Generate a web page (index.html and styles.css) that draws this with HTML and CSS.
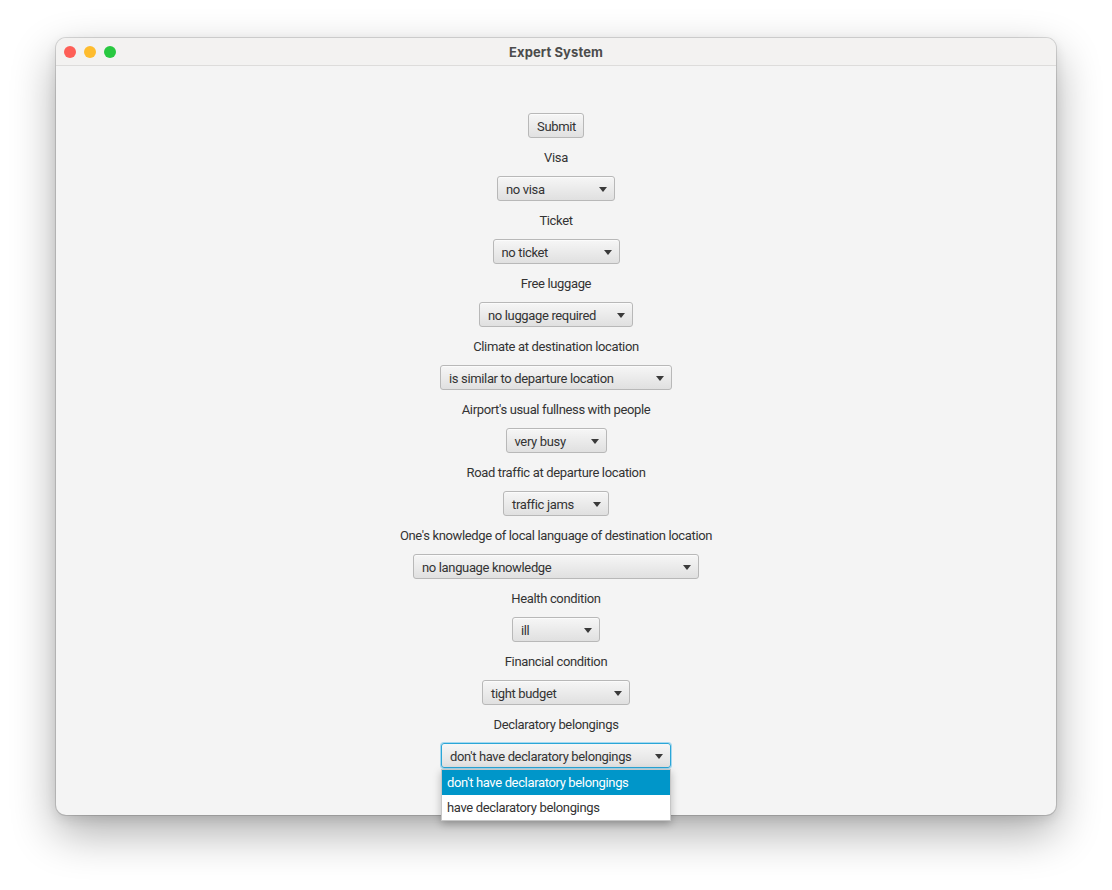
FILE: index.html
```html
<!DOCTYPE html>
<html lang="en">
<head>
<meta charset="utf-8">
<title>Expert System</title>
<link rel="stylesheet" href="styles.css">
</head>
<body>
<div class="window">
  <div class="titlebar">
    <div class="lights">
      <span class="light red"></span>
      <span class="light yellow"></span>
      <span class="light green"></span>
    </div>
    <div class="title">Expert System</div>
  </div>
  <div class="content">
    <button class="btn">Submit</button>
    <div class="label">Visa</div>
    <div class="combo w-visa"><span class="val">no visa</span><span class="arrow"></span></div>
    <div class="label">Ticket</div>
    <div class="combo w-ticket"><span class="val">no ticket</span><span class="arrow"></span></div>
    <div class="label">Free luggage</div>
    <div class="combo w-luggage"><span class="val">no luggage required</span><span class="arrow"></span></div>
    <div class="label">Climate at destination location</div>
    <div class="combo w-climate"><span class="val">is similar to departure location</span><span class="arrow"></span></div>
    <div class="label">Airport's usual fullness with people</div>
    <div class="combo w-airport"><span class="val">very busy</span><span class="arrow"></span></div>
    <div class="label">Road traffic at departure location</div>
    <div class="combo w-road"><span class="val">traffic jams</span><span class="arrow"></span></div>
    <div class="label">One's knowledge of local language of destination location</div>
    <div class="combo w-lang"><span class="val">no language knowledge</span><span class="arrow"></span></div>
    <div class="label">Health condition</div>
    <div class="combo w-health"><span class="val">ill</span><span class="arrow"></span></div>
    <div class="label">Financial condition</div>
    <div class="combo w-fin"><span class="val">tight budget</span><span class="arrow"></span></div>
    <div class="label">Declaratory belongings</div>
    <div class="combo w-decl focused"><span class="val">don't have declaratory belongings</span><span class="arrow"></span>
      <div class="popup">
        <div class="item selected">don't have declaratory belongings</div>
        <div class="item">have declaratory belongings</div>
      </div>
    </div>
  </div>
</div>
</body>
</html>
```

FILE: styles.css
```css
* { box-sizing: border-box; }
html, body { margin: 0; padding: 0; background: #ffffff; }
body {
  width: 1112px;
  height: 890px;
  overflow: hidden;
  font-family: Roboto, "Liberation Sans", sans-serif;
  letter-spacing: -0.35px;
}
.window {
  margin: 38px 0 0 56px;
  width: 1000px;
  height: 777px;
  border-radius: 10px;
  background: #f4f4f4;
  box-shadow: 0 0 0 1px rgba(0,0,0,0.13), 0 18px 45px rgba(0,0,0,0.32), 0 4px 12px rgba(0,0,0,0.10);
  display: flex;
  flex-direction: column;
}
.titlebar {
  position: relative;
  height: 28px;
  flex: none;
  background: #f3f2f1;
  border-bottom: 1px solid #dddcdb;
  border-radius: 10px 10px 0 0;
  display: flex;
  align-items: center;
  justify-content: center;
}
.lights {
  position: absolute;
  left: 8px;
  top: 8px;
  display: flex;
  gap: 8px;
}
.light {
  width: 12px;
  height: 12px;
  border-radius: 50%;
  display: block;
}
.red { background: #fe5f57; }
.yellow { background: #febc2e; }
.green { background: #28c840; }
.title {
  font-family: Inter, "Liberation Sans", sans-serif;
  font-size: 13px;
  font-weight: 700;
  color: #4c4c4c;
  letter-spacing: 0.1px;
}
.content {
  flex: 1;
  display: flex;
  flex-direction: column;
  align-items: center;
  justify-content: center;
  gap: 10px;
  border-radius: 0 0 10px 10px;
}
.btn {
  font-family: inherit;
  letter-spacing: inherit;
  height: 25px;
  width: 56px;
  padding: 0 0 0 1px;
  font-size: 13px;
  line-height: 25px;
  color: #333;
  border: 1px solid #b8b8b8;
  border-radius: 3px;
  background: linear-gradient(#f6f6f6, #e1e1e1);
  box-shadow: inset 0 1px 0 rgba(255,255,255,0.6);
}
.label {
  height: 18px;
  padding-top: 1px;
  line-height: 18px;
  font-size: 13px;
  color: #333;
  white-space: nowrap;
}
.combo {
  position: relative;
  height: 25px;
  border: 1px solid #b8b8b8;
  border-radius: 3px;
  background: linear-gradient(#f6f6f6, #e0e0e0);
  box-shadow: inset 0 1px 0 rgba(255,255,255,0.6);
  display: flex;
  align-items: center;
  justify-content: space-between;
  padding: 1px 7px 0 8px;
  font-size: 13px;
  color: #333;
  white-space: nowrap;
}
.val { flex: none; }
.arrow {
  flex: none;
  width: 0;
  height: 0;
  border-left: 4.5px solid transparent;
  border-right: 4.5px solid transparent;
  border-top: 5px solid #3a3a3a;
}
.w-visa { width: 118px; }
.w-ticket { width: 127px; }
.w-luggage { width: 154px; }
.w-climate { width: 232px; }
.w-airport { width: 101px; }
.w-road { width: 106px; }
.w-lang { width: 286px; }
.w-health { width: 88px; }
.w-fin { width: 148px; }
.w-decl { width: 230px; }
.focused {
  border-color: #2aa6d7;
  box-shadow: 0 0 0 1px #a6d8ef;
}
.popup {
  position: absolute;
  left: -1px;
  right: -1px;
  top: 25px;
  background: #ffffff;
  border: 1px solid #c6c6c6;
  box-shadow: 0 3px 8px rgba(0,0,0,0.25);
  z-index: 5;
}
.item {
  height: 25px;
  line-height: 25px;
  padding-left: 5px;
  font-size: 13px;
  color: #333;
}
.item.selected {
  background: #0096c9;
  color: #ffffff;
}
```
